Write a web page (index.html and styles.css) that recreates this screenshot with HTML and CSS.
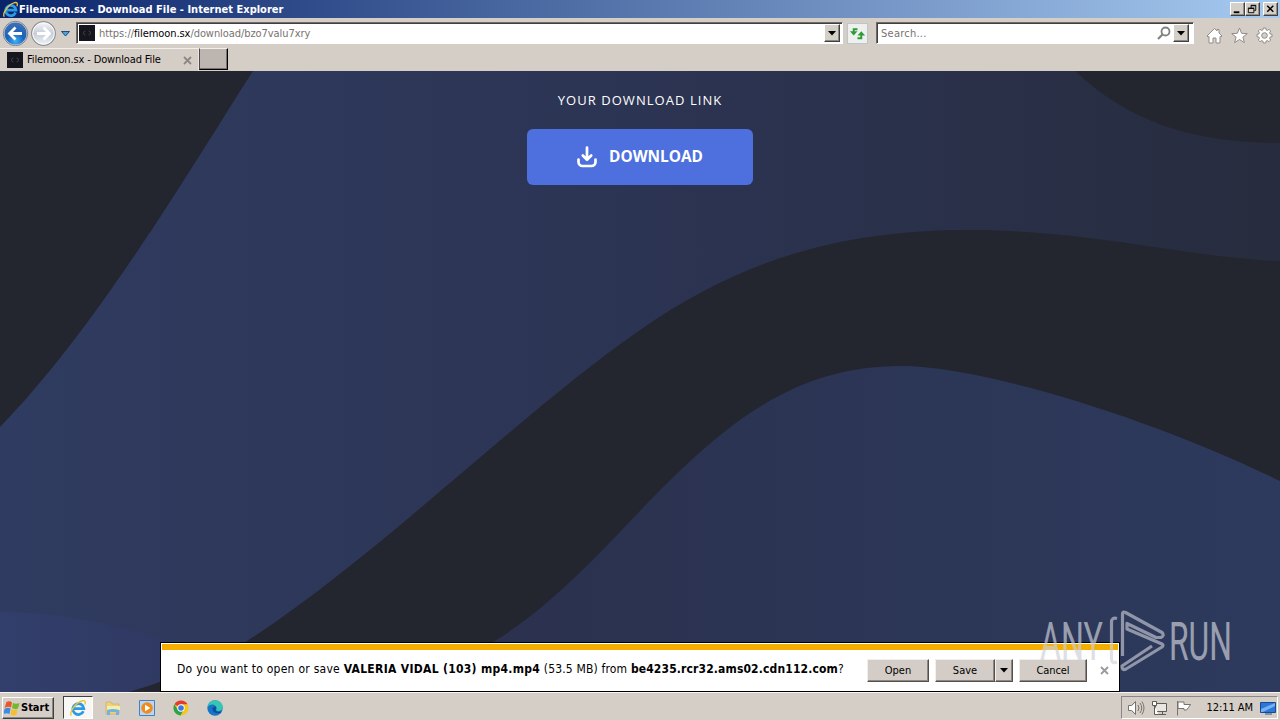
FILE: index.html
```html
<!DOCTYPE html>
<html lang="en">
<head>
<meta charset="utf-8">
<title>Filemoon.sx - Download File</title>
<link rel="stylesheet" href="styles.css">
</head>
<body>
<svg class="defs" width="0" height="0" aria-hidden="true">
  <defs>
    <radialGradient id="ball" cx=".5" cy=".85" r=".8"><stop offset="0" stop-color="#3fb0f4"/><stop offset=".5" stop-color="#1a62ba"/><stop offset="1" stop-color="#3d70b2"/></radialGradient>
    <linearGradient id="pale" x1="0" y1="0" x2="0" y2="1"><stop offset="0" stop-color="#f3f5f8"/><stop offset=".5" stop-color="#c6ccd6"/><stop offset="1" stop-color="#eef2f6"/></linearGradient>
    <symbol id="ie" viewBox="0 0 18 18">
      <path d="M14.400 12.200A5.500 5.500 0 1 1 14.800 9.600H5" fill="none" stroke="#2c9be6" stroke-width="2.800"/>
      <path d="M2.500 16.500C-.5 14.500 6 3.500 13.500 1.700C16.500 1.200 16.800 3.500 15.800 5.500" fill="none" stroke="#e8c53c" stroke-width="1.400"/>
    </symbol>
  </defs>
</svg>
<header class="titlebar">
  <svg class="title-icon" viewBox="0 0 18 18"><use href="#ie"/></svg>
  <span class="title-text">Filemoon.sx - Download File - Internet Explorer</span>
  <div class="window-buttons">
    <span class="wbtn"><svg viewBox="0 0 14 12"><path d="M3 9.500h6" stroke="#000" stroke-width="2"/></svg></span>
    <span class="wbtn"><svg viewBox="0 0 14 12"><path d="M5.500 5V2.500h5v5H9M5 2h6M2.500 5.500h6v4.500h-6zM2 5h7" fill="none" stroke="#000"/></svg></span>
    <span class="wbtn last"><svg viewBox="0 0 14 12"><path d="M3.500 2.500l6.500 6.500M10 2.500l-6.500 6.500" stroke="#000" stroke-width="1.600"/></svg></span>
  </div>
</header>
<nav class="toolbar">
  <svg class="navballs" viewBox="0 0 76 28">
    <circle cx="43.500" cy="15.500" r="12" fill="#bbb9b8" stroke="#85898f"/><circle cx="43.500" cy="15.500" r="10.800" fill="url(#pale)" stroke="#fff"/>
    <circle cx="15.500" cy="15.500" r="12.200" fill="#c6cedb" stroke="#7e8795"/><circle cx="15.500" cy="15.500" r="11" fill="url(#ball)"/>
    <path d="M22 15.500H10M15.500 9.500l-6 6 6 6" fill="none" stroke="#fff" stroke-width="2.800"/>
    <path d="M37 15.500h12M43.500 9.500l6 6-6 6" fill="none" stroke="#fff" stroke-width="2.800"/>
    <path d="M61.500 13.500h8l-4 4.500z" fill="#4ba3dc" stroke="#1b4d7e"/>
  </svg>
  <div class="field address">
    <svg class="favicon" viewBox="0 0 16 16"><path d="M0 0h16v16H0z" fill="#15161d"/><path d="M6.500 6a2 2 0 1 0 0 4M9.500 6a2 2 0 1 1 0 4" fill="none" stroke="#3c3e4d"/></svg>
    <span class="url">https://<b>filemoon.sx</b>/download/bzo7valu7xry</span>
    <span class="drop"><svg viewBox="0 0 8 5"><path d="M0 0h8L4 4.500z"/></svg></span>
  </div>
  <span class="refresh"><svg viewBox="0 0 20 20"><path d="M6 9V5.500h4M14 10.500V15h-4" fill="none" stroke="#2c9c3b" stroke-width="2"/><path d="M2 7.500h8L6 12zM10 12h8L14 7.500z" fill="#2c9c3b"/></svg></span>
  <div class="field search">
    <span class="placeholder">Search...</span>
    <svg class="lens" viewBox="0 0 14 14"><circle cx="8.500" cy="5.500" r="4" fill="none" stroke="#84807e" stroke-width="1.800"/><path d="M5.500 8.500L1 13" stroke="#84807e" stroke-width="2.200"/></svg>
    <span class="drop"><svg viewBox="0 0 8 5"><path d="M0 0h8L4 4.500z"/></svg></span>
  </div>
  <div class="commands">
    <svg viewBox="0 0 17 17"><path d="M1 9l7.500-7.500L11 4V2.500h2V6l3 3-1 1-1-.5V16h-4v-5H7v5H3V9.500L2 10z" fill="#fff" stroke="#918c88"/></svg>
    <svg viewBox="0 0 17 17"><path d="M8.500 1l2.100 5.300 5.700.3-4.400 3.500 1.500 5.500-4.900-3.100-4.900 3.100 1.500-5.500L.7 6.600l5.700-.3z" fill="#fff" stroke="#918c88"/></svg>
    <svg viewBox="0 0 17 17"><path d="M7.300 1h2.400l.4 1.900 1.200.5 1.700-1.100 1.700 1.700-1.100 1.700.5 1.200 1.900.4v2.400l-1.900.4-.5 1.200 1.100 1.700-1.700 1.700-1.700-1.100-1.200.5-.4 1.900H7.300l-.4-1.900-1.200-.5L4 14.700 2.300 13l1.100-1.700-.5-1.200L1 9.700V7.300l1.900-.4.5-1.200L2.300 4 4 2.300l1.700 1.100 1.200-.5z" fill="#fff" stroke="#918c88"/><circle cx="8.500" cy="8.500" r="2.800" fill="#d5cec7" stroke="#918c88"/></svg>
  </div>
</nav>
<div class="tabs">
  <div class="tab">
    <svg class="favicon" viewBox="0 0 16 16"><path d="M0 0h16v16H0z" fill="#15161d"/><path d="M6.500 6a2 2 0 1 0 0 4M9.500 6a2 2 0 1 1 0 4" fill="none" stroke="#3c3e4d"/></svg>
    <span class="tab-title">Filemoon.sx - Download File</span>
    <svg class="cross" viewBox="0 0 9 9"><path d="M1 1l7 7M8 1L1 8" stroke="#8b8784" stroke-width="1.800"/></svg>
  </div>
  <div class="newtab"></div>
</div>
<main class="page">
  <svg class="waves" viewBox="0 71 1280 621" preserveAspectRatio="none">
    <defs>
      <linearGradient id="g1" gradientUnits="userSpaceOnUse" x1="0" y1="0" x2="1280" y2="0"><stop offset="0" stop-color="#2f3b60"/><stop offset=".5" stop-color="#2c3453"/><stop offset="1" stop-color="#272c3e"/></linearGradient>
      <linearGradient id="g2" gradientUnits="userSpaceOnUse" x1="490" y1="0" x2="1280" y2="0"><stop offset="0" stop-color="#2b314e"/><stop offset="1" stop-color="#2d3a5d"/></linearGradient>
      <linearGradient id="g3" x1="0" y1="0" x2="1" y2="0"><stop offset="0" stop-color="#323e6b"/><stop offset="1" stop-color="#2f3962"/></linearGradient>
    </defs>
    <path d="M0 71H1280V692H0z" fill="#23252f"/>
    <path d="M253 71H1075C1130 123 1195 143 1280 143V261C1190 258 1090 230 970 230C845 230 745 257 640 330C520 413 380 555 247 641Q190 674 128 692H0V427C100 325 205 145 253 71z" fill="url(#g1)"/>
    <path d="M0 612C60 612 120 625 170 642V678Q150 686 128 692H0z" fill="url(#g3)"/>
    <path d="M400 692L495 641C550 607 597 556 640 511C730 416 800 366 901 366C980 366 1150 417 1280 481V692z" fill="url(#g2)"/>
  </svg>
  <div class="hero">
    <h1>YOUR DOWNLOAD LINK</h1>
    <a class="download">
      <svg viewBox="0 0 20 22"><path d="M10 1.500V13M5.800 9.500L10 13.700l4.200-4.200M1.500 13.500v2.500a4 4 0 0 0 4 4h9a4 4 0 0 0 4-4v-2.500" fill="none" stroke="#fff" stroke-width="2.700" stroke-linecap="round" stroke-linejoin="round"/></svg>
      <span>DOWNLOAD</span>
    </a>
  </div>
  <section class="notice">
    <div class="stripe"></div>
    <div class="notice-body">
      <p class="question"><span class="q1">Do you want to open or save </span><b class="q2">VALERIA VIDAL (103) mp4.mp4</b><span class="q3"> (53.5 MB) from </span><b class="q4">be4235.rcr32.ams02.cdn112.com</b>?</p>
      <span class="btn open">Open</span>
      <span class="btn save">Save</span><span class="btn more"><svg viewBox="0 0 8 5"><path d="M0 0h8L4 4.500z"/></svg></span>
      <span class="btn cancel">Cancel</span>
      <svg class="cross" viewBox="0 0 9 9"><path d="M1 1l7 7M8 1L1 8" stroke="#9a9a9a" stroke-width="1.800"/></svg>
    </div>
  </section>
  <svg class="watermark" viewBox="1030 600 220 80">
    <g fill="#cdd0d8" opacity=".68">
      <text x="1040" y="659.500" textLength="63" lengthAdjust="spacingAndGlyphs">ANY</text>
      <text x="1169" y="659.500" textLength="63" lengthAdjust="spacingAndGlyphs">RUN</text>
    </g>
    <path d="M1117 618.500q-5.500-1.500-5.500 4V659q0 5 5.500 3M1122.500 656V614q0-3 3-1.500L1162 632.500q3 3-1 5H1156L1127 623.500V629L1162 644q2 1 0 3L1126 669q-4 2-4-3L1152 646" fill="none" stroke="#cdd0d8" stroke-width="3.200" stroke-linejoin="round" opacity=".62"/>
  </svg>
</main>
<footer class="taskbar">
  <div class="start">
    <svg viewBox="0 0 16 16"><path d="M2.500 2q3-1.500 5.500.5L7 7.500Q4 6 .5 8z" fill="#e8562a"/><path d="M9 3q3 1.500 6.500 0l-1.500 5.500q-3 1.500-6-.5z" fill="#76b82c"/><path d="M.5 9q3-2 6-.5l-1 5.500q-3-1.500-6 0z" fill="#3c8bdc"/><path d="M7.500 9q3 2 6 .5l-1 5q-3 2-6 0z" fill="#f6bf2b"/></svg>
    <span>Start</span>
  </div>
  <div class="running"><svg viewBox="0 0 18 18"><use href="#ie"/></svg></div>
  <div class="quick">
    <svg viewBox="0 0 18 18"><path d="M2 3h5l1 2h7v10H2z" fill="#ecd27a" stroke="#c9a94e" stroke-width=".6"/><path d="M3 7h13v4H3z" fill="#f7ecaf"/><path d="M3 16v-5q6-2 12 0v5h-3v-3H6v3z" fill="#72b4dd"/></svg>
    <svg viewBox="0 0 18 18"><path d="M1.500 1.500h15v15h-15z" fill="#b9d7f2" stroke="#4a7fbd"/><circle cx="9" cy="9" r="5.800" fill="#f08a1c"/><path d="M7 5.800v6.400L12.300 9z" fill="#fff"/></svg>
    <svg viewBox="0 0 18 18"><circle cx="9" cy="9" r="7.500" fill="#f9c51d"/><path d="M9 9L2.500 5.200A7.500 7.500 0 0 1 15.500 5.200H9z" fill="#e33b2e"/><path d="M2.500 5.200A7.500 7.500 0 0 0 8.500 16.500L11.500 11L5.500 10.500z" fill="#2da24c"/><circle cx="9" cy="9" r="3.700" fill="#fff"/><circle cx="9" cy="9" r="2.800" fill="#3778e6"/></svg>
    <svg viewBox="0 0 18 18"><circle cx="9" cy="9" r="7.700" fill="#1674c8"/><path d="M1.500 8Q3 1 9.500 1.300Q16.500 2 16.700 8.500Q16 12 12 12Q9.500 12 10.500 9.500Q10 5.500 6 5.500Q3 5.700 1.500 8z" fill="#36c6b4"/><path d="M6.500 9Q6 15 14.500 14Q16 13 15 12.500Q10 14 9.500 10.500L10.500 9Q10 6 6.500 9z" fill="#0d4b99"/></svg>
  </div>
  <div class="tray">
    <svg viewBox="0 0 18 16"><path d="M1.500 5.500h3l4-4v13l-4-4h-3zM11 5q2 3 0 6M13 3q3.500 5 0 10M15 1.500q4 6.500 0 13" fill="none" stroke="#77736f"/><path d="M2 6h3l3-3v10l-3-3H2z" fill="#fff"/></svg>
    <svg viewBox="0 0 18 16"><path d="M4.500 3.500h11v8h-11zM7 14.500h8M11.500 11.500v3" fill="#e9e6e2" stroke="#5f5b58"/><path d="M1.500 1.500h4v4h-4zM3.500 5.500v9h4" fill="#fff" stroke="#5f5b58"/></svg>
    <svg viewBox="0 0 18 16"><path d="M2.500 1v14.500M3 2h6v2.500h6.500l-2 3-2 2.500H9V8.500H3z" fill="#fff" stroke="#77736f"/></svg>
    <span class="clock">12:11 AM</span>
    <svg viewBox="0 0 18 16"><path d="M1.500 2.500h15v10h-15z" fill="#2f77d4" stroke="#174a92"/><path d="M2 9L16 3v3L4 12H2z" fill="#75b2f3"/><path d="M6 14h7" stroke="#5d7fa9" stroke-width="1.500"/></svg>
  </div>
</footer>
</body>
</html>
```

FILE: styles.css
```css
* { box-sizing: border-box; }
body {
  margin: 0; width: 1280px; height: 720px; overflow: hidden;
  display: flex; flex-direction: column;
  font: 11px/14px "DejaVu Sans Condensed", "DejaVu Sans", sans-serif;
  font-stretch: condensed; color: #000; background: #d5cec7; white-space: nowrap;
}
svg { display: block; flex: none; }
.defs { position: absolute; }

.titlebar {
  height: 18px; flex: none; display: flex; align-items: center; padding: 0 2px;
  background: linear-gradient(90deg, #0a246a, #a6caf0);
}
.title-icon { width: 17px; height: 17px; }
.title-text { color: #fff; font-weight: bold; letter-spacing: .01px; flex: 1; padding-top: 1px; }
.window-buttons { display: flex; }
.wbtn {
  width: 15px; height: 14px; background: #d4d0c8; border: 1px solid;
  border-color: #fff #404040 #404040 #fff; box-shadow: inset -1px -1px #928e88;
}
.wbtn svg { width: 13px; height: 12px; }
.wbtn.last { margin-left: 3px; }

.toolbar { height: 30px; flex: none; display: flex; align-items: center; }
.navballs { width: 76px; height: 28px; align-self: flex-start; }
.field {
  height: 22px; display: flex; align-items: center; background: #fff;
  border: 1px solid; border-color: #716b67 #fff #fff #716b67;
  box-shadow: inset 1px 1px #404040; color: #77736f;
}
.address { width: 767px; padding: 0 2px 0 2px; }
.favicon { width: 16px; height: 16px; }
.url { flex: 1; padding: 2px 0 0 4px; letter-spacing: -.07px; }
.url b { color: #000; font-weight: normal; }
.drop {
  width: 16px; height: 18px; display: grid; place-items: center; background: #d4d0c8;
  border: 1px solid; border-color: #fff #404040 #404040 #fff; box-shadow: inset -1px -1px #8b8784;
}
.drop svg, .more svg { width: 8px; height: 5px; }
.refresh { width: 21px; height: 21px; margin: 0 8px 0 4px; background: #eef0ed; border: 1px solid #bdc4cb; display: grid; place-items: center; }
.refresh svg { width: 19px; height: 19px; }
.search { width: 318px; padding: 0 4px 0 4px; }
.placeholder { flex: 1; padding-top: 2px; letter-spacing: .25px; }
.lens { width: 14px; height: 14px; margin-right: 2px; }
.commands { display: flex; gap: 8px; padding: 4px 0 0 12px; }
.commands svg { width: 17px; height: 17px; }

.tabs { height: 23px; flex: none; display: flex; }
.tab { width: 199px; display: flex; align-items: center; padding: 0 6px 0 7px; border-top: 1px solid #f3f0ec; border-right: 1px solid #e9e5e0; }
.tab-title { padding-left: 4px; flex: 1; letter-spacing: -.13px; }
.cross { width: 9px; height: 9px; }
.newtab { width: 29px; height: 22px; background: #bdb5af; border: 1px solid; border-color: #f3f0ec #000 #000 #4c4845; box-shadow: inset -1px -1px #77736f; }

.page { flex: 1; position: relative; overflow: hidden; }
.waves { position: absolute; inset: 0; width: 100%; height: 100%; }
.hero { position: relative; display: flex; flex-direction: column; align-items: center; padding-top: 20px; }
h1 { margin: 0 0 19px; font: 400 13px/19px "Open Sans", sans-serif; letter-spacing: 1.05px; color: #fff; }
.download {
  width: 226px; height: 56px; border-radius: 6px; background: #4e70df;
  display: flex; align-items: center; justify-content: center; gap: 12px;
  font: 700 15.4px/20px "Open Sans", sans-serif; color: #fff;
}
.download svg { width: 20px; height: 22px; }

.notice {
  position: absolute; left: 160px; bottom: 0; width: 960px; height: 50px;
  background: #fff; border: 1px solid #000; padding: 1px;
}
.stripe { height: 6px; background: #f5ae00; }
.notice-body { height: 40px; display: flex; align-items: center; padding: 0 9px 0 15px; }
.question { margin: 0; font-size: 12px; flex: 1; white-space: pre; padding-bottom: 2px; }
.q1 { letter-spacing: .26px; }
.q2 { letter-spacing: .31px; }
.q3 { letter-spacing: .17px; }
.q4 { letter-spacing: .14px; }
.btn {
  height: 23px; display: grid; place-items: center; background: #d4cdc7; border: 1px solid;
  border-color: #f3f0ec #55504c #55504c #f3f0ec; box-shadow: inset -1px -1px #8b8784; padding-top: 2px;
}
.open { width: 62px; margin-right: 6px; }
.save { width: 60px; }
.more { width: 18px; margin-right: 6px; padding-top: 0; }
.cancel { width: 68px; margin-right: 13px; letter-spacing: -.1px; }
.watermark { position: absolute; left: 1030px; top: 529px; width: 220px; height: 80px; }
.watermark text { font: 400 53px Roboto, sans-serif; }

.taskbar { height: 28px; flex: none; display: flex; align-items: center; padding: 2px 2px 0; border-top: 1px solid #f7f5f2; }
.start {
  width: 52px; height: 22px; display: flex; align-items: center; padding-left: 1px; gap: 1px; font-weight: bold;
  border: 1px solid; border-color: #fff #404040 #404040 #fff; box-shadow: inset -1px -1px #8b8784;
}
.start svg { width: 16px; height: 16px; }
.running {
  width: 30px; height: 23px; margin-left: 9px; background: #f8f7f5; display: grid; place-items: center;
  border: 1px solid; border-color: #404040 #fff #fff #404040;
}
.running svg { width: 18px; height: 18px; }
.quick { display: flex; gap: 16px; padding-left: 11px; flex: 1; }
.quick svg { width: 18px; height: 18px; }
.tray {
  height: 23px; display: flex; align-items: center; gap: 6px; padding: 0 0 0 5px;
  border: 1px solid; border-color: #8b8784 #fff #fff #8b8784;
}
.tray svg { width: 18px; height: 16px; }
.clock { padding: 0 0 0 7px; letter-spacing: -.05px; }
```
